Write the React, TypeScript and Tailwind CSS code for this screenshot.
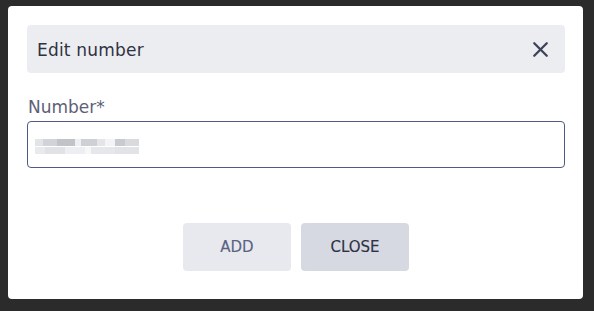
import { X } from 'lucide-react'

export default function App() {
  return (
    <div
      className="w-[594px] h-[311px] bg-[#2b2b2b] pt-[6px] pl-[8px]"
      style={{ fontFamily: '"DejaVu Sans", Inter, sans-serif' }}
    >
      <div className="w-[575px] h-[293px] bg-white rounded-[4px] px-[19px] pt-[19px] flex flex-col">
        {/* Header */}
        <div className="h-[48px] w-[538px] bg-[#ecedf1] rounded-[4px] flex items-center justify-between pl-[10px] pr-[12px]">
          <span className="text-[17px] leading-[20px] text-[#2f3242] pt-[1px] tracking-[0.2px]">Edit number</span>
          <X className="w-[25px] h-[25px] text-[#3e4258]" strokeWidth={2.2} />
        </div>

        {/* Field */}
        <label className="mt-[24px] text-[17px] leading-[20px] text-[#5d6175] pl-[1px]">Number*</label>
        <div className="mt-[4px] w-[538px] h-[47px] border border-[#4e5a82] rounded-[4px] flex items-center pl-[7px] pt-[4px]">
          <div className="flex flex-col gap-[1px]">
            <div className="flex">
              <div className="w-[8px] h-[7px] bg-[#e3e4e8]" />
              <div className="w-[14px] h-[7px] bg-[#d2d3d8]" />
              <div className="w-[18px] h-[7px] bg-[#c2c3c9]" />
              <div className="w-[6px] h-[7px] bg-[#eeeff1]" />
              <div className="w-[16px] h-[7px] bg-[#cfd0d5]" />
              <div className="w-[8px] h-[7px] bg-[#e4e5e8]" />
              <div className="w-[10px] h-[7px] bg-[#f4f4f6]" />
              <div className="w-[10px] h-[7px] bg-[#c9cacf]" />
              <div className="w-[14px] h-[7px] bg-[#d9dade]" />
            </div>
            <div className="flex">
              <div className="w-[10px] h-[7px] bg-[#e9eaed]" />
              <div className="w-[20px] h-[7px] bg-[#e1e2e6]" />
              <div className="w-[20px] h-[7px] bg-[#eceef1]" />
              <div className="w-[6px] h-[7px] bg-[#f7f7f8]" />
              <div className="w-[24px] h-[7px] bg-[#e6e7ea]" />
              <div className="w-[24px] h-[7px] bg-[#e2e3e7]" />
            </div>
          </div>
        </div>

        {/* Actions */}
        <div className="mt-[55px] flex justify-center gap-[10px] pl-[1px]">
          <button className="w-[108px] h-[48px] rounded-[4px] bg-[#e8e9ef] text-[#5b6383] text-[15px] [-webkit-text-stroke:0.15px]">
            ADD
          </button>
          <button className="w-[108px] h-[48px] rounded-[4px] bg-[#d6d9e2] text-[#2f3242] text-[15px] [-webkit-text-stroke:0.15px]">
            CLOSE
          </button>
        </div>
      </div>
    </div>
  )
}
